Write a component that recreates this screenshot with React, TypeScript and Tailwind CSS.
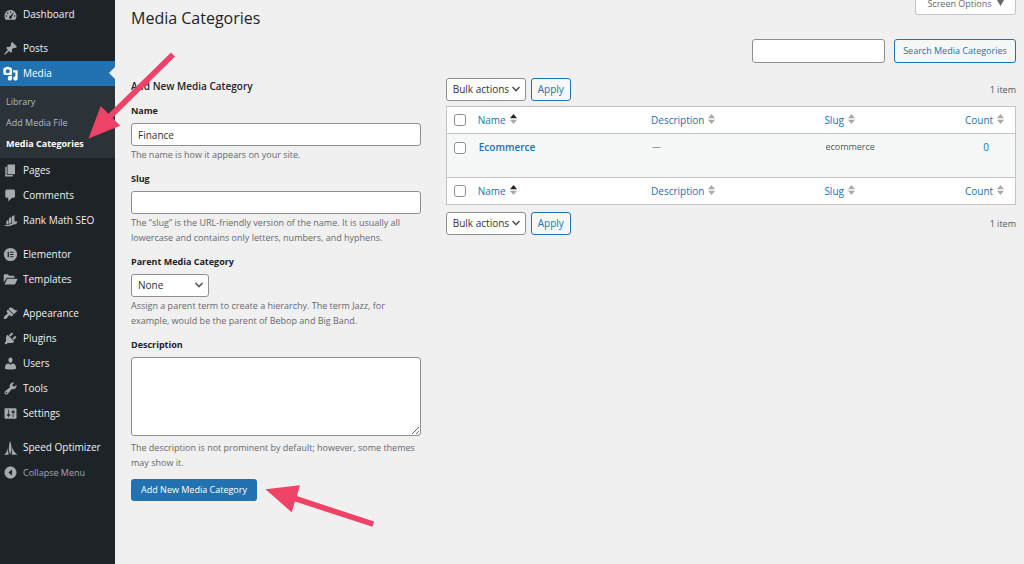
import { ReactNode } from 'react';

const ICONS: Record<string, ReactNode> = {
  dashboard: (
    <path fillRule="evenodd" d="M3.760 17h12.480A7.940 7.940 0 0 0 18 12c0-4.420-3.580-8-8-8s-8 3.580-8 8c0 1.900.66 3.650 1.760 5zM10 5.600a1 1 0 1 1 0 2 1 1 0 0 1 0-2zM6.200 7.200a1 1 0 1 1 0 2 1 1 0 0 1 0-2zM4.600 11a1 1 0 1 1 0 2 1 1 0 0 1 0-2zm10.800 0a1 1 0 1 1 0 2 1 1 0 0 1 0-2zM14.600 6.800l-3 6.600c.5 1.100-.3 2.300-1.600 2.300-1.200 0-2-.9-1.900-2 .1-.8.6-1.300 1.300-1.600z" />
  ),
  posts: (
    <path d="M10.440 3.020l1.820-1.820 6.360 6.350-1.830 1.820c-1.050-.68-2.480-.57-3.410.36l-.75.75c-.92.93-1.040 2.350-.35 3.410l-1.830 1.820-2.410-2.410-2.800 2.790c-.42.42-3.380 2.710-3.800 2.290s1.860-3.390 2.280-3.810l2.790-2.790L4.100 9.360l1.830-1.820c1.050.69 2.480.57 3.400-.36l.75-.75c.93-.92 1.050-2.350.36-3.410z" />
  ),
  media: (
    <path fillRule="evenodd" d="M12 10.500V4.500c0-1.700-1-2.500-2.500-2.500H8.700L8 1H4.500L3.700 2H3C1.500 2 .5 3 .5 4.500v5C.5 11 1.500 12 3 12h7.500c.8 0 1.500-.7 1.500-1.500zM6.300 4.200a2.800 2.800 0 1 1 0 5.600 2.800 2.800 0 0 1 0-5.600zM13.500 5.500H19.500v11c0 1.600-1.200 2.900-2.900 2.900s-2.900-1.300-2.900-2.900 1.200-2.800 2.800-2.900V8.500h-3zM9.300 13H12v3.500c0 1.600-1.200 2.900-2.800 2.900s-2.800-1.300-2.800-2.900S7.500 13 9.300 13z" />
  ),
  pages: <path d="M6 15V2h10v13H6zm-1 1h8v2H3V5h2v11z" />,
  comments: (
    <path d="M5 2h9c1.100 0 2 .9 2 2v7c0 1.100-.9 2-2 2h-2l-5 5v-5H5c-1.100 0-2-.9-2-2V4c0-1.100.9-2 2-2z" />
  ),
  rank: (
    <path d="M4.500 10.500l2.800-1.500v5.500l-2.800 1zM8 6.800l3.200-1.500v7.700L8 14.500zM12 4.300L15.300 3v8.500L12 13.500zM.5 16.500c4.500-.2 9.500-.8 14.300-4.300l-.8-1.200 5.500.2-2.500 4.600-.9-1.400C11.500 17.500 5.500 18.500.5 16.500z" />
  ),
  elementor: (
    <path fillRule="evenodd" d="M10 1.200a8.800 8.800 0 1 0 0 17.600 8.800 8.800 0 0 0 0-17.600zM6.200 6.200h1.700v7.600H6.200zM9.500 6.200h4.500v1.600H9.500zM9.500 9.200h4.500v1.600H9.500zM9.500 12.200h4.500v1.600H9.500z" />
  ),
  templates: (
    <path d="M1 14V4.500C1 3.700 1.500 3 2.300 3H6.500l1.600 2H14c.8 0 1.300.5 1.300 1.300V7.500H5zM2 16.500l3.600-7.500h13.900l-3.600 7.500z" />
  ),
  appearance: (
    <path d="M14.480 11.060L7.410 3.990l1.500-1.500c.5-.56 2.300-.47 3.510.32 1.210.8 1.430 1.280 2.910 2.100 1.180.64 2.450 1.260 4.450.85zm-.71.71L6.700 4.700 4.930 6.470c-.39.39-.39 1.020 0 1.410l1.060 1.060c.39.39.39 1.030 0 1.420-.6.6-1.430 1.110-2.210 1.690-.35.26-.7.53-1.010.84C1.430 14.230.4 16.080 1.400 17.070c.99 1 2.840-.03 4.180-1.360.31-.31.58-.66.85-1.020.57-.78 1.080-1.610 1.690-2.210.39-.39 1.020-.39 1.410 0l1.060 1.060c.39.39 1.020.39 1.410 0z" />
  ),
  plugins: (
    <path d="M13.110 4.360L9.870 7.600 8 5.730l3.240-3.240c.35-.34 1.050-.2 1.560.32.52.51.66 1.210.31 1.550zm-8 1.770l.91-1.120 9.010 9.010-1.190.84c-.71.71-2.630 1.160-3.820 1.160H6.140L4.900 17.260c-.59.59-1.540.59-2.120 0-.59-.58-.59-1.530 0-2.120l1.240-1.240v-3.880c0-1.130.4-3.190 1.090-3.890zm7.260 3.970l3.240-3.240c.34-.35 1.040-.21 1.550.31.52.51.66 1.210.31 1.550l-3.240 3.250z" />
  ),
  users: (
    <path d="M10 9.250c-2.270 0-2.730-3.440-2.730-3.440C7 4.020 7.820 2 9.970 2c2.160 0 2.980 2.020 2.710 3.810 0 0-.41 3.440-2.680 3.440zm0 2.570L12.720 10c2.390 0 4.520 2.330 4.520 4.530v2.490s-3.650 1.130-7.240 1.130c-3.650 0-7.240-1.130-7.240-1.130v-2.490c0-2.250 1.940-4.480 4.470-4.480z" />
  ),
  tools: (
    <path fillRule="evenodd" d="M16.680 9.770c-1.340 1.340-3.300 1.670-4.950.99l-5.410 6.520c-.99.99-2.590.99-3.580 0s-.99-2.590 0-3.570l6.520-5.420c-.68-1.650-.35-3.610.99-4.950 1.280-1.280 3.120-1.620 4.720-1.060l-2.890 2.890 2.820 2.820 2.860-2.870c.53 1.580.18 3.390-1.080 4.650zM3.810 16.210c.4.39 1.040.39 1.430 0 .4-.4.4-1.040 0-1.430-.39-.4-1.030-.4-1.430 0-.39.39-.39 1.030 0 1.430z" />
  ),
  settings: (
    <path fillRule="evenodd" d="M18 16V4c0-.55-.45-1-1-1H3c-.55 0-1 .45-1 1v12c0 .55.45 1 1 1h14c.55 0 1-.45 1-1zM8 11h1c.55 0 1 .45 1 1s-.45 1-1 1H8v1.500c0 .28-.22.5-.5.5s-.5-.22-.5-.5V13H6c-.55 0-1-.45-1-1s.45-1 1-1h1V5.500c0-.28.22-.5.5-.5s.5.22.5.5V11zm5-2h-1c-.55 0-1-.45-1-1s.45-1 1-1h1V5.500c0-.28.22-.5.5-.5s.5.22.5.5V7h1c.55 0 1 .45 1 1s-.45 1-1 1h-1v5.500c0 .28-.22.5-.5.5s-.5-.22-.5-.5V9z" />
  ),
  speed: (
    <path d="M9.500 1c1.300 4 1.900 7 2 12l-1.500 5.500H9.200L7.700 13C7.800 8.500 8.300 5 9.500 1zM6.500 10.500l.3 4.500L7.500 19.500H1.500c3-2.500 4.500-5 5-9zM12.600 9.500c.8 4.500 3 7.500 6.900 10h-7.800z" />
  ),
  collapse: (
    <path fillRule="evenodd" d="M10 2c4.400 0 8 3.600 8 8s-3.600 8-8 8-8-3.600-8-8 3.600-8 8-8zm2 4.100L7.200 10l4.800 3.900z" />
  ),
};

const GROUPS = [
  [['dashboard', 'Dashboard']],
  [
    ['posts', 'Posts'],
    ['media', 'Media'],
    ['pages', 'Pages'],
    ['comments', 'Comments'],
    ['rank', 'Rank Math SEO'],
  ],
  [
    ['elementor', 'Elementor'],
    ['templates', 'Templates'],
  ],
  [
    ['appearance', 'Appearance'],
    ['plugins', 'Plugins'],
    ['users', 'Users'],
    ['tools', 'Tools'],
    ['settings', 'Settings'],
  ],
  [['speed', 'Speed Optimizer']],
];

function MenuIcon({ name }: { name: string }) {
  return (
    <svg viewBox="0 0 20 20" className="w-[15px] h-[15px] shrink-0" fill="currentColor" aria-hidden="true">
      {ICONS[name]}
    </svg>
  );
}

function MenuItem({ icon, label }: { icon: string; label: string }) {
  const active = icon === 'media';
  return (
    <li>
      <a
        href="#"
        className={`relative flex items-center gap-[5px] h-[25px] pl-[3px] ${active ? 'bg-[#2271b1] text-white' : 'text-[#a7aaad]'}`}
      >
        <MenuIcon name={icon} />
        <span className={active ? 'text-white' : 'text-[#f0f0f1]'}>{label}</span>
        {active && (
          <svg className="absolute right-0 top-[6px] w-[6px] h-3" viewBox="0 0 6 12" fill="#f0f0f1">
            <path d="M6 0v12L0 6z" />
          </svg>
        )}
      </a>
      {active && (
        <ul className="bg-[#2c3338] pt-[5px] pb-1 text-[9px] text-[#b4b9be]">
          <li><a href="#" className="flex items-center h-[21px] pl-[6px]">Library</a></li>
          <li><a href="#" className="flex items-center h-[21px] pl-[6px]">Add Media File</a></li>
          <li><a href="#" className="flex items-center h-[21px] pl-[6px] font-bold text-white">Media Categories</a></li>
        </ul>
      )}
    </li>
  );
}

function Sidebar() {
  return (
    <nav className="w-[115px] shrink-0 bg-[#1d2327] pt-[2px] text-[10px]">
      <div className="flex flex-col gap-[9px]">
        {GROUPS.map((group, i) => (
          <ul key={i}>
            {group.map(([icon, label]) => (
              <MenuItem key={icon} icon={icon} label={label} />
            ))}
          </ul>
        ))}
      </div>
      <button type="button" className="flex items-center gap-[5px] h-[25px] w-full pl-[3px] text-[9px] text-[#a7aaad]">
        <MenuIcon name="collapse" />
        Collapse Menu
      </button>
    </nav>
  );
}

function Select({ id, label, option, width }: { id: string; label?: string; option: string; width: string }) {
  return (
    <div className={`relative ${width}`}>
      <select
        id={id}
        aria-label={label}
        className="appearance-none block w-full h-[23px] pl-[6px] rounded-[3px] border border-[#8c8f94] bg-white text-[10px] text-[#2c3338]"
      >
        <option>{option}</option>
      </select>
      <svg className="absolute right-[5px] top-[6px] w-[10px] h-[10px] pointer-events-none" viewBox="0 0 10 10" fill="none" stroke="#50575e" strokeWidth="1.6">
        <path d="M1.500 3l3.500 3.500L8.500 3" />
      </svg>
    </div>
  );
}

function Field({ id, label, help, children }: { id: string; label: string; help: string; children: ReactNode }) {
  return (
    <div className="mt-[9px]">
      <label htmlFor={id} className="block mb-1 leading-4 font-bold text-[#1d2327]">{label}</label>
      {children}
      <p className="mt-px leading-[15px] text-[#646970]">{help}</p>
    </div>
  );
}

function BulkActions({ id }: { id: string }) {
  return (
    <div className="flex items-center">
      <Select id={id} label="Select bulk action" option="Bulk actions" width="w-20" />
      <button type="button" className="ml-[5px] w-10 h-[23px] rounded-[3px] border border-[#2271b1] bg-[#f6f7f7] text-[10px] text-[#2271b1]">
        Apply
      </button>
      <span className="ml-auto text-[#50575e]">1 item</span>
    </div>
  );
}

function SortLink({ label, sorted }: { label: string; sorted?: boolean }) {
  return (
    <a href="#" className="inline-flex items-center gap-1 text-[#2271b1]">
      {label}
      <svg className="w-[7px] h-[10px] mb-[2px]" viewBox="0 0 7 10">
        <path d="M3.500 0L7 4.300H0z" fill={sorted ? '#1d2327' : '#a7aaad'} />
        <path d="M3.500 10L7 5.700H0z" fill="#a7aaad" />
      </svg>
    </a>
  );
}

function Checkbox({ label }: { label: string }) {
  return (
    <input
      type="checkbox"
      aria-label={label}
      className="appearance-none block ml-[7px] w-3 h-3 rounded-[3px] border border-[#8c8f94] bg-white"
    />
  );
}

function HeadingRow({ edge }: { edge: string }) {
  const cell = `h-[27px] p-0 pl-2 text-[10px] font-normal text-left align-middle ${edge}`;
  return (
    <tr className="bg-white">
      <td className={`h-[27px] p-0 align-middle ${edge}`}><Checkbox label="Select all" /></td>
      <th scope="col" className={cell}><SortLink label="Name" sorted /></th>
      <th scope="col" className={cell}><SortLink label="Description" /></th>
      <th scope="col" className={cell}><SortLink label="Slug" /></th>
      <th scope="col" className={cell}><SortLink label="Count" /></th>
    </tr>
  );
}

function TermsTable() {
  return (
    <table className="mt-[5px] mb-[7px] w-full table-fixed border-separate border-spacing-0 border border-[#c3c4c7]">
      <colgroup>
        <col className="w-[23px]" />
        <col className="w-[30.5%]" />
        <col className="w-[30.5%]" />
        <col />
        <col className="w-[58px]" />
      </colgroup>
      <thead>
        <HeadingRow edge="border-b border-[#c3c4c7]" />
      </thead>
      <tbody>
        <tr className="bg-[#f6f7f7] text-[#50575e]">
          <td className="h-[43px] p-0 pt-2 align-top"><Checkbox label="Select Ecommerce" /></td>
          <td className="p-0 pt-[5px] pl-[9px] align-top leading-4">
            <a href="#" className="text-[10px] font-semibold text-[#2271b1]">Ecommerce</a>
          </td>
          <td className="p-0 pt-[5px] pl-[9px] align-top leading-4">—</td>
          <td className="p-0 pt-[5px] pl-[9px] align-top leading-4">ecommerce</td>
          <td className="p-0 pt-[5px] align-top leading-4 text-center"><a href="#" className="text-[10px] text-[#2271b1]">0</a></td>
        </tr>
      </tbody>
      <tfoot>
        <HeadingRow edge="border-t border-[#c3c4c7]" />
      </tfoot>
    </table>
  );
}

export default function App() {
  const box = 'block w-full rounded-[3px] border border-[#8c8f94] bg-white text-[10px] text-[#2c3338]';

  return (
    <div className="relative flex min-h-screen bg-[#f0f0f1] font-['Open_Sans',sans-serif] text-[9px] text-[#3c434a]">
      <Sidebar />

      <main className="relative flex-1 min-w-0 pl-4 pr-2">
        <button
          type="button"
          className="absolute right-2 top-0 flex items-start justify-center gap-[5px] w-[101px] h-[15px] leading-[8px] rounded-b-[3px] border border-t-0 border-[#c3c4c7] bg-white text-[#646970]"
        >
          Screen Options
          <svg className="w-[7px] h-[6px]" viewBox="0 0 7 6" fill="currentColor"><path d="M0 0h7L3.500 6z" /></svg>
        </button>

        <h1 className="text-[16px] leading-9 text-[#1d2327]">Media Categories</h1>

        {/* Search */}
        <form className="flex justify-end gap-[9px] mt-[3px] mb-[15px]">
          <input type="search" aria-label="Search Media Categories" className="w-[133px] h-6 px-2 rounded-[3px] border border-[#8c8f94] bg-white" />
          <button type="button" className="w-[122px] h-6 rounded-[3px] border border-[#2271b1] bg-[#f6f7f7] text-[#2271b1]">
            Search Media Categories
          </button>
        </form>

        <div className="flex">
          {/* Add form */}
          <form className="w-[35%] shrink-0 pr-5">
            <h2 className="leading-4 font-semibold text-[10px] text-[#1d2327]">Add New Media Category</h2>
            <Field id="tag-name" label="Name" help="The name is how it appears on your site.">
              <input id="tag-name" type="text" defaultValue="Finance" className={`${box} h-[23px] px-[6px]`} />
            </Field>
            <Field id="tag-slug" label="Slug" help="The “slug” is the URL-friendly version of the name. It is usually all lowercase and contains only letters, numbers, and hyphens.">
              <input id="tag-slug" type="text" className={`${box} h-[23px] px-[6px]`} />
            </Field>
            <Field id="parent" label="Parent Media Category" help="Assign a parent term to create a hierarchy. The term Jazz, for example, would be the parent of Bebop and Big Band.">
              <Select id="parent" option="None" width="w-[78px]" />
            </Field>
            <Field id="tag-description" label="Description" help="The description is not prominent by default; however, some themes may show it.">
              <textarea id="tag-description" className={`${box} h-[79px] mb-1 px-[6px]`} />
            </Field>
            <button type="button" className="mt-[9px] w-[126px] h-[22px] rounded-[3px] bg-[#2271b1] text-white">
              Add New Media Category
            </button>
          </form>

          {/* Terms list */}
          <div className="flex-1 min-w-0 pl-[5px]">
            <BulkActions id="bulk-top" />
            <TermsTable />
            <BulkActions id="bulk-bottom" />
          </div>
        </div>
      </main>

      {/* Pointer arrows */}
      <svg className="absolute left-[88px] top-[52px] w-[88px] h-[88px] pointer-events-none" viewBox="88 52 88 88" fill="#ee4266">
        <path d="M88.500 138.500L100.700 106l7.800 7.800L171 52.500l4 4-62.500 61.500 7.800 7.700z" />
      </svg>
      <svg className="absolute left-[265px] top-[484px] w-[110px] h-[44px] pointer-events-none" viewBox="265 484 110 44" fill="#ee4266">
        <path d="M265.500 489.300L300 485.300l-3.200 10.700 77.300 25.600-1.600 5.200-77.500-25.300-3.300 10.800z" />
      </svg>
    </div>
  );
}
